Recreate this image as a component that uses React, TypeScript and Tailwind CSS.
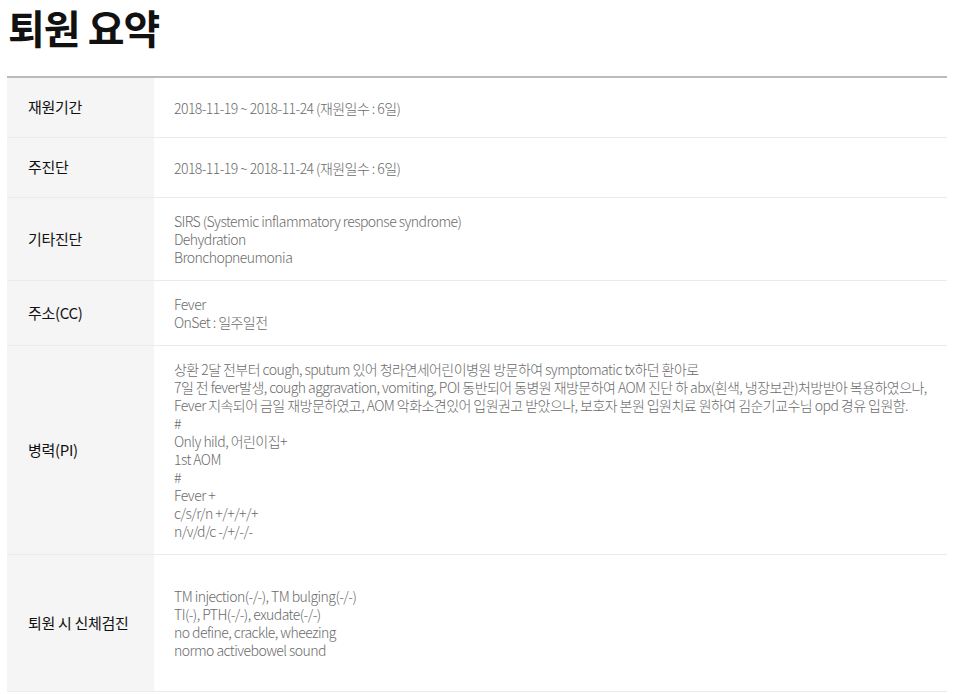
import React from "react";

const rows: { label: string; lines: string[] }[] = [
  { label: "재원기간", lines: ["2018-11-19 ~ 2018-11-24 (재원일수 : 6일)"] },
  { label: "주진단", lines: ["2018-11-19 ~ 2018-11-24 (재원일수 : 6일)"] },
  {
    label: "기타진단",
    lines: [
      "SIRS (Systemic inflammatory response syndrome)",
      "Dehydration",
      "Bronchopneumonia",
    ],
  },
  { label: "주소(CC)", lines: ["Fever", "OnSet : 일주일전"] },
  {
    label: "병력(PI)",
    lines: [
      "상환 2달 전부터 cough, sputum 있어 청라연세어린이병원 방문하여 symptomatic tx하던 환아로",
      "7일 전 fever발생, cough aggravation, vomiting, POI 동반되어 동병원 재방문하여 AOM 진단 하 abx(흰색, 냉장보관)처방받아 복용하였으나,",
      "Fever 지속되어 금일 재방문하였고, AOM 악화소견있어 입원권고 받았으나, 보호자 본원 입원치료 원하여 김순기교수님 opd 경유 입원함.",
      "#",
      "Only hild, 어린이집+",
      "1st AOM",
      "#",
      "Fever +",
      "c/s/r/n +/+/+/+",
      "n/v/d/c -/+/-/-",
    ],
  },
  {
    label: "퇴원 시 신체검진",
    lines: [
      "",
      "TM injection(-/-), TM bulging(-/-)",
      "TI(-), PTH(-/-), exudate(-/-)",
      "no define, crackle, wheezing",
      "normo activebowel sound",
      "",
    ],
  },
];

export default function App() {
  return (
    <div className="min-h-screen bg-white font-['Noto_Sans_CJK_KR','Noto_Sans',sans-serif]">
      <div className="pl-[7px] pr-[13px]">
        <h1 className="pt-[1px] pl-[1px] text-[40px] font-bold leading-[52px] tracking-[-1px] text-[#111]">
          퇴원 요약
        </h1>
        <div className="mt-[23px] border-t-2 border-[#bbbbbb]">
          {rows.map((r) => (
            <div key={r.label} className="flex border-b border-[#ebebeb]">
              <div className="flex w-[147px] shrink-0 items-center bg-[#f5f5f5] pl-[21px] text-[15px] tracking-[-0.3px] text-[#111]">
                {r.label}
              </div>
              <div className="flex min-h-[59px] flex-1 flex-col justify-center py-[14px] pl-[20px] text-[14px] font-light leading-[18px] tracking-[-0.55px] text-[#6b6b6b]">
                {r.lines.map((l, i) => (
                  <div key={i} className="h-[18px] whitespace-nowrap leading-[18px]">
                    {l}
                  </div>
                ))}
              </div>
            </div>
          ))}
        </div>
      </div>
    </div>
  );
}
